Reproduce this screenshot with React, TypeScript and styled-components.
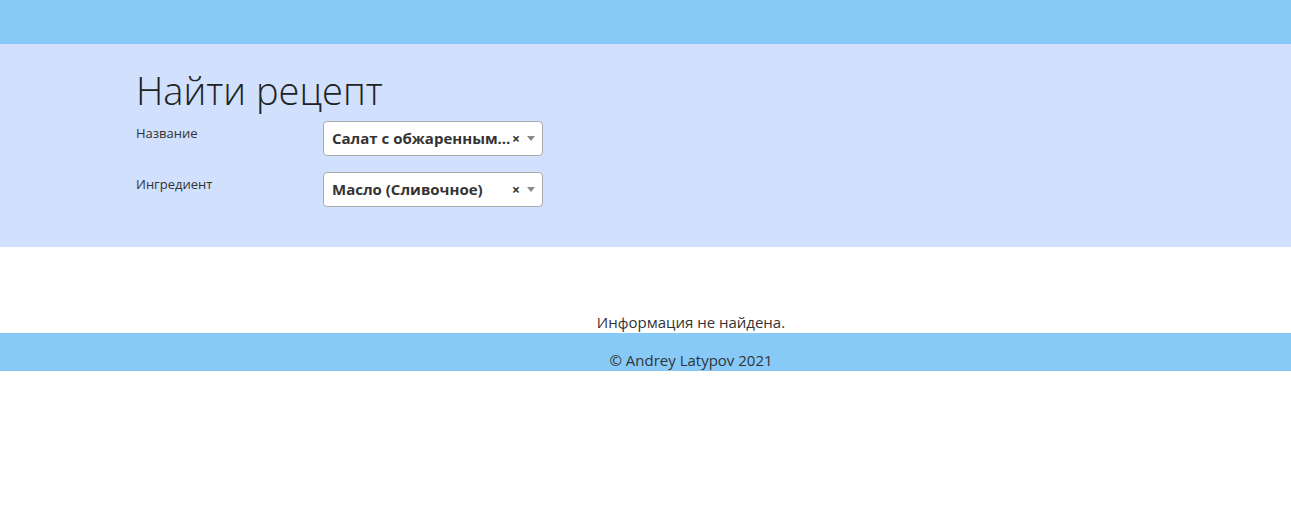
import React from "react";
import styled, { createGlobalStyle } from "styled-components";

const Global = createGlobalStyle`
  html, body { margin: 0; padding: 0; background: #fff; }
  body { font-family: "Open Sans", "Noto Sans", sans-serif; color: #333; }
`;

const TopBar = styled.header`
  height: 44px;
  background: #87caf8;
`;

const SearchSection = styled.section`
  background: #d1e0fc;
  padding: 24px 0 40px;
`;

const Container = styled.div`
  margin-left: 136px;
  width: 1110px;
`;

const Title = styled.h1`
  margin: 0 0 9px;
  font-size: 38px;
  line-height: 44px;
  font-weight: 300;
  color: #222;
`;

const Rows = styled.div`
  display: flex;
  flex-direction: column;
  gap: 16px;
`;

const Row = styled.div`
  display: flex;
  align-items: flex-start;
`;

const Label = styled.label`
  width: 187px;
  font-size: 13px;
  line-height: 20px;
  padding-top: 2px;
  color: #333;
`;

const Select = styled.div`
  box-sizing: border-box;
  width: 220px;
  height: 35px;
  display: flex;
  align-items: center;
  background: #fff;
  border: 1px solid #aaa;
  border-radius: 4px;
  padding: 0 6px 0 8px;
`;

const Value = styled.span`
  flex: 1;
  min-width: 0;
  white-space: nowrap;
  overflow: hidden;
  text-overflow: ellipsis;
  font-weight: 700;
  font-size: 15px;
  line-height: 33px;
  color: #333;
`;

const Clear = styled.span`
  font-weight: 700;
  font-size: 14px;
  line-height: 33px;
  color: #333;
  width: 8px;
  text-align: center;
`;

const Arrow = styled.span`
  width: 0;
  height: 0;
  margin-left: 7px;
  margin-right: 1px;
  border-left: 4px solid transparent;
  border-right: 4px solid transparent;
  border-top: 5px solid #888;
`;

const Results = styled.main`
  padding-top: 64px;
`;

const Centered = styled.p`
  margin: 0;
  text-align: center;
  font-size: 15px;
  line-height: 22px;
  color: #333;
`;

const Footer = styled.footer`
  background: #87caf8;
  padding-top: 16px;
`;

function SelectBox({ value }: { value: string }) {
  return (
    <Select>
      <Value>{value}</Value>
      <Clear>×</Clear>
      <Arrow />
    </Select>
  );
}

export default function App() {
  return (
    <>
      <Global />
      <TopBar />
      <SearchSection>
        <Container>
          <Title>Найти рецепт</Title>
          <Rows>
            <Row>
              <Label>Название</Label>
              <SelectBox value="Салат с обжаренными баклажанами" />
            </Row>
            <Row>
              <Label>Ингредиент</Label>
              <SelectBox value="Масло (Сливочное)" />
            </Row>
          </Rows>
        </Container>
      </SearchSection>
      <Results>
        <Container>
          <Centered>Информация не найдена.</Centered>
        </Container>
      </Results>
      <Footer>
        <Container>
          <Centered>© Andrey Latypov 2021</Centered>
        </Container>
      </Footer>
    </>
  );
}
